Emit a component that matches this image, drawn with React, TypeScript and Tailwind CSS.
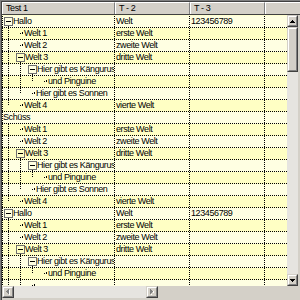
import React from "react";

type Node = { t: string; c2?: string; c3?: string; children?: Node[]; nobox?: boolean };

const sub = (): Node[] => [
  { t: "Welt 1", c2: "erste Welt" },
  { t: "Welt 2", c2: "zweite Welt" },
  {
    t: "Welt 3",
    c2: "dritte Welt",
    children: [
      { t: "Hier gibt es Kängurus", children: [{ t: "und Pinguine" }] },
      { t: "Hier gibt es Sonnen" },
    ],
  },
  { t: "Welt 4", c2: "vierte Welt" },
];

const tree: Node[] = [
  { t: "Hallo", c2: "Welt", c3: "123456789", children: sub() },
  { t: "Schüss", nobox: true, children: sub() },
  { t: "Hallo", c2: "Welt", c3: "123456789", children: sub() },
];

type Flat = { node: Node; level: number; anc: boolean[]; last: boolean };

function flatten(nodes: Node[], level: number, anc: boolean[], out: Flat[]) {
  nodes.forEach((n, i) => {
    const last = i === nodes.length - 1;
    out.push({ node: n, level, anc, last });
    if (n.children) flatten(n.children, level + 1, [...anc, last], out);
  });
}

const all: Flat[] = [];
flatten(tree, 0, [], all);
const rows = all.slice(0, 23);

const ORIGIN = 3;
const cx = (a: number) => 8 + 12 * a;

function TreeGlyph({ f, index }: { f: Flat; index: number }) {
  const top = 16 + 12 * index;
  const L = f.level;
  const hasBox = !!f.node.children && !f.node.nobox;
  if (f.node.nobox) return null;
  const width = hasBox ? 10 + 12 * L : 9 + 12 * L;
  const dots: React.ReactNode[] = [];
  const vline = (a: number, y0: number, y1: number) => {
    const x = cx(a) - ORIGIN;
    for (let y = y0; y <= y1; y++) {
      if ((top + y) % 2 === 0) dots.push(<rect key={`v${a}-${y}`} x={x} y={y} width={1} height={1} fill="#000" />);
    }
  };
  for (let a = 0; a <= L - 2; a++) {
    if (!f.anc[a + 1]) vline(a, 0, 10);
  }
  if (L >= 1) {
    vline(L - 1, 0, f.last ? 5 : 10);
  }
  const c = cx(L) - ORIGIN;
  if (hasBox) {
    vline(L, 10, 10);
    dots.push(
      <rect key="box" x={c - 4 + 0.5} y={1.5} width={8} height={8} fill="none" stroke="#707070" strokeWidth={1} />
    );
    dots.push(<rect key="minus" x={c - 2} y={5} width={5} height={1} fill="#000" />);
  } else {
    for (let x = c; x <= c + 3; x++) {
      if ((x + ORIGIN) % 2 === 0) dots.push(<rect key={`h${x}`} x={x} y={5} width={1} height={1} fill="#000" />);
    }
    dots.push(<rect key="tk" x={c + 2} y={4} width={1} height={1} fill="#000" />);
  }
  return (
    <svg width={width} height={11} className="shrink-0" shapeRendering="crispEdges">
      {dots}
    </svg>
  );
}

function Btn({ children }: { children: React.ReactNode }) {
  return (
    <div className="h-[12px] w-[11px] shrink-0 border-t border-l border-t-[#d4d0c8] border-l-[#d4d0c8] border-r border-b border-r-[#404040] border-b-[#404040] flex">
      <div className="flex-1 flex items-center justify-center bg-[#d4d0c8] border-t border-l border-t-white border-l-white border-r border-b border-r-[#808080] border-b-[#808080]">
        {children}
      </div>
    </div>
  );
}

function HBtn({ children }: { children: React.ReactNode }) {
  return (
    <div className="h-[12px] w-[12px] shrink-0 border-t border-l border-t-[#d4d0c8] border-l-[#d4d0c8] border-r border-b border-r-[#404040] border-b-[#404040] flex">
      <div className="flex-1 flex items-center justify-center bg-[#d4d0c8] border-t border-l border-t-white border-l-white border-r border-b border-r-[#808080] border-b-[#808080]">
        {children}
      </div>
    </div>
  );
}

export default function App() {
  return (
    <div className="w-[300px] h-[300px] overflow-hidden bg-[#d4d0c8] text-black font-['Liberation_Sans',Arial,sans-serif] text-[9px] leading-[11px] tracking-[-0.4px]">
      <div className="w-[300px] h-[300px] border-l border-t border-[#808080]">
        <div className="h-[299px] border-l border-t border-[#404040] flex flex-col">
          {/* header */}
          <div className="h-[13px] shrink-0 flex border-b border-[#404040] bg-[#d4d0c8]">
            <div className="w-[113px] shrink-0 flex items-center pl-[3px] border-l border-t border-white border-r border-r-[#808080]">Test 1</div>
            <div className="w-[75px] shrink-0 flex items-center pl-[3px] border-l border-t border-white border-r border-r-[#808080]">T - 2</div>
            <div className="w-[75px] shrink-0 flex items-center pl-[3px] border-l border-t border-white border-r border-r-[#808080]">T - 3</div>
            <div className="flex-1 border-l border-t border-white"></div>
          </div>
          {/* body */}
          <div className="h-[271px] shrink-0 flex">
            <div className="w-[285px] shrink-0 overflow-hidden bg-[#ffffd0] pt-px">
              {rows.map((f, i) => {
                const partial = i >= 22;
                return (
                  <div
                    key={i}
                    className={`h-[12px] flex border-b border-dotted border-black ${i % 2 === 0 ? "bg-[#ffffe2]" : "bg-[#ffffc4]"}`}
                  >
                    <div className="w-[113px] shrink-0 flex border-l border-r border-dotted border-black overflow-hidden whitespace-nowrap">
                      <TreeGlyph f={f} index={i} />
                      {!partial && <span>{f.node.t}</span>}
                    </div>
                    <div className="w-[75px] shrink-0 pl-px border-r border-dotted border-black whitespace-nowrap overflow-hidden">
                      {!partial && (f.node.c2 ?? "")}
                    </div>
                    <div className="w-[75px] shrink-0 pl-px border-r border-dotted border-black whitespace-nowrap overflow-hidden">
                      {!partial && (f.node.c3 ?? "")}
                    </div>
                    <div className="flex-1"></div>
                  </div>
                );
              })}
            </div>
            {/* vertical scrollbar */}
            <div className="w-[11px] shrink-0 flex flex-col bg-[#e6e4e0]">
              <Btn>
                <svg width="5" height="3" shapeRendering="crispEdges">
                  <rect x="2" y="0" width="1" height="1" fill="#000" />
                  <rect x="1" y="1" width="3" height="1" fill="#000" />
                  <rect x="0" y="2" width="5" height="1" fill="#000" />
                </svg>
              </Btn>
              <div className="h-[45px] w-[11px] shrink-0 border-t border-l border-t-[#d4d0c8] border-l-[#d4d0c8] border-r border-b border-r-[#404040] border-b-[#404040] flex">
                <div className="flex-1 bg-[#d4d0c8] border-t border-l border-t-white border-l-white border-r border-b border-r-[#808080] border-b-[#808080]"></div>
              </div>
              <div className="flex-1"></div>
              <Btn>
                <svg width="5" height="3" shapeRendering="crispEdges">
                  <rect x="0" y="0" width="5" height="1" fill="#000" />
                  <rect x="1" y="1" width="3" height="1" fill="#000" />
                  <rect x="2" y="2" width="1" height="1" fill="#000" />
                </svg>
              </Btn>
            </div>
          </div>
          {/* horizontal scrollbar */}
          <div className="h-[12px] shrink-0 flex">
            <HBtn>
              <svg width="4" height="6" shapeRendering="crispEdges">
                <rect x="2" y="0" width="1" height="5" fill="#808080" />
                <rect x="1" y="1" width="1" height="3" fill="#808080" />
                <rect x="0" y="2" width="1" height="1" fill="#808080" />
                <rect x="3" y="1" width="1" height="5" fill="#ffffff" />
              </svg>
            </HBtn>
            <div className="flex-1 bg-[#e6e4e0]"></div>
            <HBtn>
              <svg width="4" height="6" shapeRendering="crispEdges">
                <rect x="0" y="0" width="1" height="5" fill="#808080" />
                <rect x="1" y="1" width="1" height="3" fill="#808080" />
                <rect x="2" y="2" width="1" height="1" fill="#808080" />
                <rect x="1" y="5" width="1" height="1" fill="#ffffff" />
                <rect x="3" y="2" width="1" height="2" fill="#ffffff" />
              </svg>
            </HBtn>
            <div className="w-[11px] shrink-0 bg-[#d4d0c8]"></div>
            <div className="flex-1"></div>
          </div>
        </div>
      </div>
    </div>
  );
}
